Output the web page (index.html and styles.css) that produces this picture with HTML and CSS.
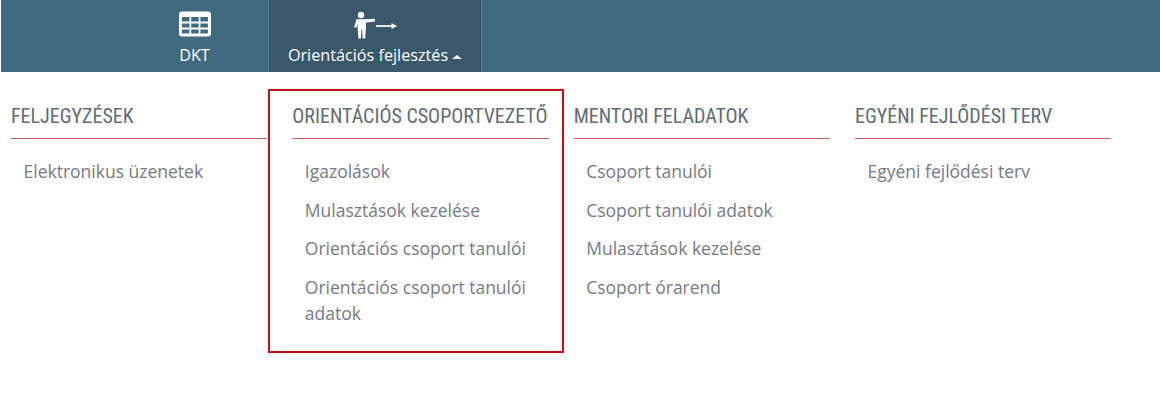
FILE: index.html
```html
<!DOCTYPE html>
<html lang="hu">
<head>
    <meta charset="UTF-8">
    <meta name="viewport" content="width=device-width, initial-scale=1.0">
    <title>Orientációs fejlesztés</title>
    <link rel="stylesheet" href="styles.css">
</head>
<body>
    <nav class="top-nav">
        <a class="nav-item nav-item-dkt" href="#">
            <svg class="nav-icon" width="34" height="26" viewBox="0 0 34 26">
                <rect x="1" y="0.5" width="32" height="25" rx="3" fill="#ffffff"/>
                <g fill="#406a7f">
                    <rect x="4" y="6" width="7.5" height="4.5"/>
                    <rect x="13.2" y="6" width="7.5" height="4.5"/>
                    <rect x="22.4" y="6" width="7.5" height="4.5"/>
                    <rect x="4" y="12.5" width="7.5" height="4"/>
                    <rect x="13.2" y="12.5" width="7.5" height="4"/>
                    <rect x="22.4" y="12.5" width="7.5" height="4"/>
                    <rect x="4" y="18.5" width="7.5" height="4"/>
                    <rect x="13.2" y="18.5" width="7.5" height="4"/>
                    <rect x="22.4" y="18.5" width="7.5" height="4"/>
                </g>
            </svg>
            <span>DKT</span>
        </a>
        <a class="nav-item nav-item-active" href="#">
            <svg class="nav-icon" width="44" height="28" viewBox="0 0 44 28">
                <g fill="#ffffff">
                    <circle cx="8" cy="4" r="3.2"/>
                    <path d="M3.5 8.2h8.5l10-0.4v2.6l-9 1.2v5l-0.8 11h-2.6l-0.4-9h-0.8l-0.4 9h-2.6l-0.8-11v-3.5l-1.2 3.5h-2.4z"/>
                    <rect x="23" y="14.2" width="16" height="1.7"/>
                    <path d="M38.5 12l5.5 3-5.5 3z"/>
                </g>
            </svg>
            <span>Orientációs fejlesztés<i class="caret"></i></span>
        </a>
    </nav>

    <div class="menu">
        <section class="menu-col">
            <h2>FELJEGYZÉSEK</h2>
            <ul>
                <li><a href="#">Elektronikus üzenetek</a></li>
            </ul>
        </section>
        <section class="menu-col menu-col-marked">
            <h2>ORIENTÁCIÓS CSOPORTVEZETŐ</h2>
            <ul>
                <li><a href="#">Igazolások</a></li>
                <li><a href="#">Mulasztások kezelése</a></li>
                <li><a href="#">Orientációs csoport tanulói</a></li>
                <li><a href="#">Orientációs csoport tanulói adatok</a></li>
            </ul>
        </section>
        <section class="menu-col">
            <h2>MENTORI FELADATOK</h2>
            <ul>
                <li><a href="#">Csoport tanulói</a></li>
                <li><a href="#">Csoport tanulói adatok</a></li>
                <li><a href="#">Mulasztások kezelése</a></li>
                <li><a href="#">Csoport órarend</a></li>
            </ul>
        </section>
        <section class="menu-col">
            <h2>EGYÉNI FEJLŐDÉSI TERV</h2>
            <ul>
                <li><a href="#">Egyéni fejlődési terv</a></li>
            </ul>
        </section>
    </div>
</body>
</html>
```

FILE: styles.css
```css
body {
    margin: 0;
    padding: 0;
    min-height: 100vh;
    background-color: #ffffff;
    font-family: 'Open Sans', sans-serif;
    color: #777b85;
}
.top-nav {
    display: flex;
    height: 72px;
    margin-left: 1px;
    padding-left: 120px;
    background-color: #406a7f;
}
.nav-item {
    display: flex;
    flex-direction: column;
    align-items: center;
    justify-content: space-between;
    box-sizing: border-box;
    padding: 11px 0 6px;
    color: #ffffff;
    font-size: 16.2px;
    line-height: 22px;
    text-decoration: none;
}
.nav-item-dkt {
    width: 147px;
}
.nav-item-active {
    width: 214px;
    background-color: #39586a;
    border-left: 1px solid #4f788c;
    border-right: 1px solid #4f788c;
}
.caret {
    display: inline-block;
    width: 0;
    height: 0;
    margin-left: 4px;
    vertical-align: 2px;
    border-left: 5px solid transparent;
    border-right: 5px solid transparent;
    border-bottom: 4px solid #ffffff;
}
.menu {
    display: flex;
    gap: 25px;
    padding: 17px 0 24px 11px;
}
.menu-col {
    position: relative;
    width: 256.33px;
}
.menu-col h2 {
    margin: 0;
    padding: 15px 0 9px;
    border-bottom: 1px solid #c5675f;
    font-family: 'Roboto', sans-serif;
    font-stretch: condensed;
    font-size: 20px;
    font-weight: 400;
    line-height: 25px;
    color: #626c75;
}
.menu-col ul {
    margin: 0;
    padding: 19px 0 0 12.5px;
    list-style: none;
}
.menu-col li {
    margin-bottom: 12.5px;
    font-size: 17.5px;
    line-height: 26px;
}
.menu-col a {
    color: #777b85;
    text-decoration: none;
}
/* red frame marked on the screenshot */
.menu-col-marked::after {
    content: "";
    position: absolute;
    top: 0;
    left: -24px;
    width: 292px;
    height: 260px;
    border: 2px solid #c0141c;
}
```
